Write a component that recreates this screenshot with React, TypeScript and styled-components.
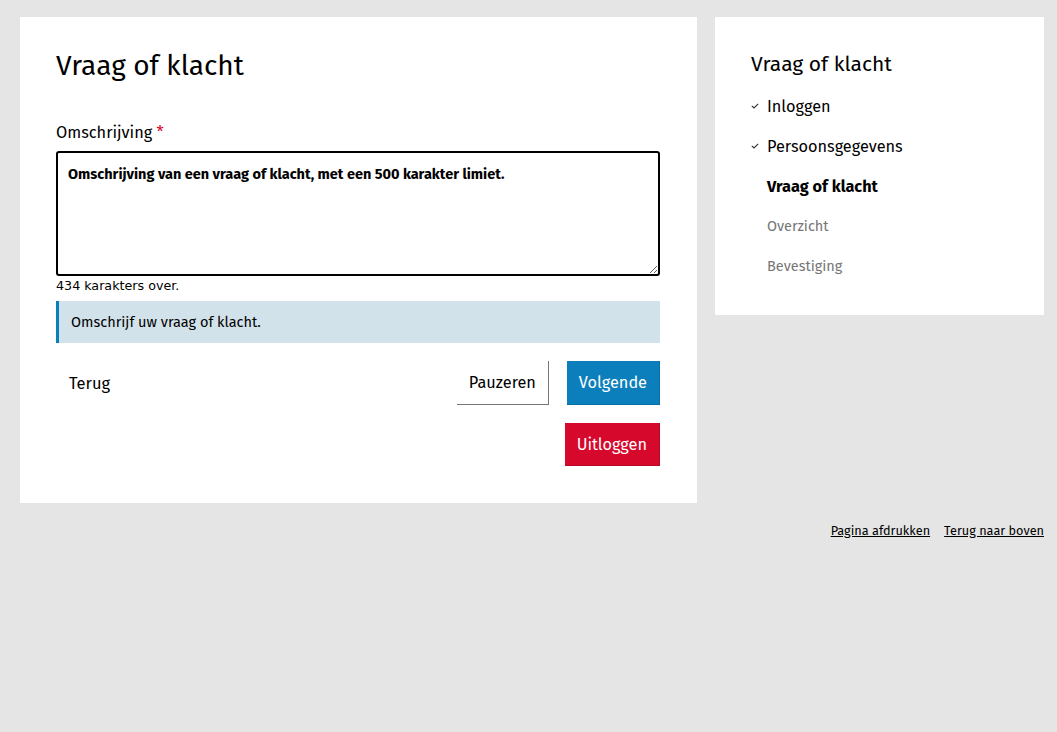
import React from "react";
import styled, { createGlobalStyle } from "styled-components";

const Global = createGlobalStyle`
  html, body { margin: 0; padding: 0; background: #e5e5e5; }
  body { font-family: "Fira Sans", Lato, "Noto Sans", sans-serif; color: #000; }
  * { box-sizing: border-box; }
`;

const Page = styled.div`
  padding: 17px 13px 0 20px;
`;

const Columns = styled.div`
  display: flex;
  align-items: flex-start;
  gap: 18px;
`;

const MainCard = styled.main`
  width: 677px;
  background: #fff;
  padding: 28px 37px 37px 36px;
`;

const Title = styled.h1`
  margin: 0 0 34px;
  font-size: 28px;
  font-weight: 400;
  line-height: 42px;
`;

const Label = styled.label`
  display: block;
  font-size: 16.3px;
  line-height: 24px;
  margin-bottom: 6px;
`;

const Required = styled.span`
  color: #d6092d;
`;

const TextArea = styled.textarea`
  display: block;
  width: 100%;
  height: 125px;
  border: 2px solid #000;
  border-radius: 3px;
  padding: 10px 10px;
  font-family: "Fira Sans", Lato, "Noto Sans", sans-serif;
  font-weight: 700;
  font-size: 14.5px;
  line-height: 22px;
  color: #000;
  resize: vertical;
`;

const Counter = styled.div`
  font-family: "DejaVu Sans", sans-serif;
  font-size: 12.7px;
  line-height: 20px;
`;

const Info = styled.div`
  margin-top: 5px;
  background: #d2e2eb;
  border-left: 3px solid #0b7fbc;
  padding: 10px 12px;
  font-size: 14.5px;
  line-height: 22px;
`;

const Actions = styled.div`
  display: flex;
  align-items: center;
  margin-top: 18px;
  gap: 18px;
`;

const Spacer = styled.div`
  flex: 1;
`;

const LinkButton = styled.button`
  border: 0;
  background: none;
  padding: 0 13px;
  height: 44px;
  font-family: inherit;
  font-size: 16.5px;
  color: #000;
`;

const Button = styled.button<{ $variant: "plain" | "primary" | "danger" }>`
  height: ${(p) => (p.$variant === "danger" ? 43 : 44)}px;
  padding: 0 12px;
  font-family: inherit;
  font-size: 16.3px;
  border: 0;
  border-radius: 0;
  background: ${(p) =>
    p.$variant === "primary" ? "#0b7fbc" : p.$variant === "danger" ? "#d6092d" : "#fff"};
  color: ${(p) => (p.$variant === "plain" ? "#000" : "#fff")};
  border-right: 1px solid
    ${(p) => (p.$variant === "plain" ? "#777" : p.$variant === "primary" ? "#0a6fa5" : "#b8072a")};
  border-bottom: 1px solid
    ${(p) => (p.$variant === "plain" ? "#777" : p.$variant === "primary" ? "#0a6fa5" : "#b8072a")};
`;

const SecondRow = styled.div`
  display: flex;
  justify-content: flex-end;
  margin-top: 18px;
`;

const Side = styled.aside`
  width: 329px;
  background: #fff;
  padding: 33px 36px 29px;
`;

const SideTitle = styled.h2`
  margin: 0 0 8px;
  font-size: 21px;
  font-weight: 400;
  line-height: 28px;
`;

const Steps = styled.ol`
  list-style: none;
  margin: 0;
  padding: 0;
`;

const Step = styled.li<{ $state: "done" | "current" | "todo" }>`
  display: flex;
  align-items: center;
  height: 40px;
  font-size: ${(p) => (p.$state === "done" ? 16.3 : p.$state === "current" ? 16.3 : 14.5)}px;
  font-weight: ${(p) => (p.$state === "current" ? 700 : 400)};
  color: ${(p) => (p.$state === "todo" ? "#767676" : "#000")};
`;

const Mark = styled.span`
  width: 16px;
  display: inline-flex;
  align-items: center;
`;

const Footer = styled.footer`
  display: flex;
  justify-content: flex-end;
  gap: 14px;
  padding-top: 19px;
`;

const FooterLink = styled.a`
  font-size: 12.7px;
  color: #000;
  text-decoration: underline;
  line-height: 18px;
`;

const Check = () => (
  <svg width="8" height="6" viewBox="0 0 8 6" fill="none">
    <path d="M0.8 2.8 L3 5 L7.2 0.8" stroke="#333" strokeWidth="1.1" />
  </svg>
);

const steps: { label: string; state: "done" | "current" | "todo" }[] = [
  { label: "Inloggen", state: "done" },
  { label: "Persoonsgegevens", state: "done" },
  { label: "Vraag of klacht", state: "current" },
  { label: "Overzicht", state: "todo" },
  { label: "Bevestiging", state: "todo" },
];

export default function App() {
  return (
    <Page>
      <Global />
      <Columns>
        <MainCard>
          <Title>Vraag of klacht</Title>
          <Label htmlFor="omschrijving">
            Omschrijving <Required>*</Required>
          </Label>
          <TextArea
            id="omschrijving"
            defaultValue="Omschrijving van een vraag of klacht, met een 500 karakter limiet."
          />
          <Counter>434 karakters over.</Counter>
          <Info>Omschrijf uw vraag of klacht.</Info>
          <Actions>
            <LinkButton>Terug</LinkButton>
            <Spacer />
            <Button $variant="plain">Pauzeren</Button>
            <Button $variant="primary">Volgende</Button>
          </Actions>
          <SecondRow>
            <Button $variant="danger">Uitloggen</Button>
          </SecondRow>
        </MainCard>
        <Side>
          <SideTitle>Vraag of klacht</SideTitle>
          <Steps>
            {steps.map((s) => (
              <Step key={s.label} $state={s.state}>
                <Mark>{s.state === "done" && <Check />}</Mark>
                {s.label}
              </Step>
            ))}
          </Steps>
        </Side>
      </Columns>
      <Footer>
        <FooterLink href="#">Pagina afdrukken</FooterLink>
        <FooterLink href="#">Terug naar boven</FooterLink>
      </Footer>
    </Page>
  );
}
